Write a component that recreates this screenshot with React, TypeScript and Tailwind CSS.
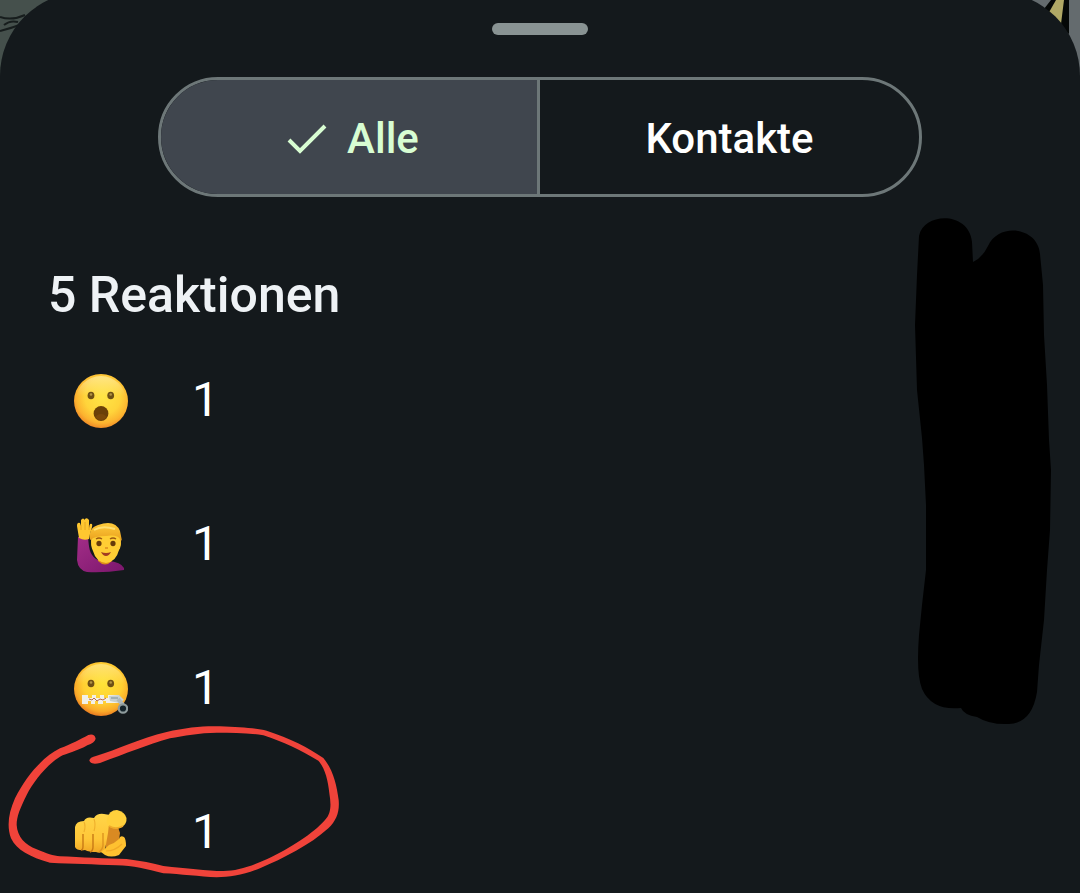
import { useState } from "react";

function SurprisedFace() {
  return (
    <svg viewBox="0 0 56 56" className="size-14 shrink-0" role="img" aria-label="Erstauntes Gesicht">
      <defs>
        <radialGradient id="surprised-skin" cx="0.53" cy="0.42" r="0.6">
          <stop offset="0" stopColor="#ffe546" />
          <stop offset="0.55" stopColor="#ffd43b" />
          <stop offset="0.82" stopColor="#fcb32f" />
          <stop offset="1" stopColor="#ef8526" />
        </radialGradient>
        <linearGradient id="surprised-shine" x1="0" y1="0" x2="0" y2="1">
          <stop offset="0" stopColor="#fff3b8" stopOpacity="0.6" />
          <stop offset="0.4" stopColor="#fff3b8" stopOpacity="0" />
        </linearGradient>
      </defs>
      <circle cx="29" cy="28" r="27" fill="url(#surprised-skin)" />
      <circle cx="29" cy="28" r="25" fill="url(#surprised-shine)" />
      <ellipse cx="19" cy="22.5" rx="3.4" ry="3.8" fill="#6e5016" />
      <ellipse cx="38.7" cy="22.5" rx="3.4" ry="3.8" fill="#6e5016" />
      <circle cx="19" cy="21.5" r="1.3" fill="#b29445" />
      <circle cx="38.7" cy="21.5" r="1.3" fill="#b29445" />
      <circle cx="29" cy="40.5" r="7.4" fill="#6b4008" />
      <ellipse cx="29" cy="44" rx="5" ry="3" fill="#7a480a" />
    </svg>
  );
}

function RaisedHandPerson() {
  return (
    <svg viewBox="0 0 56 56" className="size-14 shrink-0" role="img" aria-label="Person mit erhobener Hand">
      <defs>
        <linearGradient id="shirt" x1="0" y1="0" x2="1" y2="1">
          <stop offset="0" stopColor="#a22d87" />
          <stop offset="1" stopColor="#7c176d" />
        </linearGradient>
        <linearGradient id="hair" x1="0" y1="0" x2="0" y2="1">
          <stop offset="0" stopColor="#ffcb3a" />
          <stop offset="1" stopColor="#e9a01e" />
        </linearGradient>
      </defs>
      <path d="M6 20 H16 C17 30 17 37 24 42 Q29 45 36 44 Q49 45 52 51 L52 53 Q32 56 15 55 Q6 53 5 43Z" fill="url(#shirt)" />
      <path d="M26 39 H40 V44 Q33 51 26 44Z" fill="#dc8d17" />
      <path d="M7 21 L5 9 Q5 5 8 6 L9 9 L9 3 Q11 0 13 3 L13 2 Q15 0 17 3 L17 11 L18 7 Q21 6 20 10 L18 17 L17 22 Q12 24 7 21Z" fill="#ffc730" />
      <path d="M9 8 V13 M13 5 V13 M17 8 V13" stroke="#e0a022" strokeWidth="0.8" />
      <ellipse cx="34" cy="24" rx="15" ry="17" fill="url(#hair)" />
      <path d="M20 22 Q22 17 34 18 Q46 16 48 23 Q50 28 47 33 Q44 45 34 46 Q24 45 21 34 Q18 28 20 22Z" fill="#ffce34" />
      <path d="M18 23 Q16 11 26 8 Q43 2 48 14 L50 24 Q46 17 34 19 Q23 19 18 23Z" fill="url(#hair)" />
      <path d="M22 13 Q30 8 43 12" fill="none" stroke="#ffdf70" strokeWidth="2" />
      <path d="M24 22 Q27 20 30 22 M38 22 Q41 20 44 22" fill="none" stroke="#9c5812" strokeWidth="1.4" />
      <ellipse cx="27" cy="26.5" rx="2.6" ry="2.7" fill="#673b0a" />
      <ellipse cx="41" cy="26.5" rx="2.6" ry="2.7" fill="#673b0a" />
      <path d="M33 31 H36" stroke="#dd8e20" strokeWidth="1.5" />
      <path d="M29 35 Q34 37 39 35 Q37 39 34 39 Q31 39 29 35Z" fill="#a13d22" />
    </svg>
  );
}

function ZippedFace() {
  return (
    <svg viewBox="0 0 56 56" className="size-14 shrink-0" role="img" aria-label="Gesicht mit Reißverschlussmund">
      <defs>
        <radialGradient id="zipped-skin" cx="0.53" cy="0.4" r="0.6">
          <stop offset="0" stopColor="#ffe438" />
          <stop offset="0.6" stopColor="#ffcf32" />
          <stop offset="0.86" stopColor="#faaa29" />
          <stop offset="1" stopColor="#e97d21" />
        </radialGradient>
        <linearGradient id="zipped-shine" x1="0" y1="0" x2="0" y2="1">
          <stop offset="0" stopColor="#fff3b8" stopOpacity="0.5" />
          <stop offset="0.4" stopColor="#fff3b8" stopOpacity="0" />
        </linearGradient>
      </defs>
      <circle cx="29" cy="28" r="27" fill="url(#zipped-skin)" />
      <circle cx="29" cy="28" r="25" fill="url(#zipped-shine)" />
      <ellipse cx="19" cy="22.5" rx="3.4" ry="3.8" fill="#6e5016" />
      <ellipse cx="38.7" cy="22.5" rx="3.4" ry="3.8" fill="#6e5016" />
      <circle cx="19" cy="21.5" r="1.3" fill="#b29445" />
      <circle cx="38.7" cy="21.5" r="1.3" fill="#b29445" />
      <path d="M10 34 H16 V37 H20 V34 H24 V37 H28 V34 H32 V37 H36 V34 H47 V42 H34 V40 H31 V43 H26 V40 H23 V43 H19 V40 H16 V43 H10Z" fill="#f2f0e8" />
      <path d="M16 38.5 H37" stroke="#f2f0e8" strokeWidth="3" />
      <path d="M17 38 L20 39 L22 37 L25 40 L28 38 L31 39 L34 37" fill="none" stroke="#b7684a" strokeWidth="1" />
      <path d="M37 35 L47 34 L52 39 L47 42 L38 40Z" fill="#c6d0d1" />
      <path d="M39 37 H46" stroke="#8c9ea2" strokeWidth="1.3" />
      <path d="M46 38 L51 44" stroke="#afb9ba" strokeWidth="4" />
      <circle cx="51" cy="47.5" r="4.2" fill="#15242b" stroke="#8e9b9c" strokeWidth="2.2" />
    </svg>
  );
}

function PointingHand() {
  return (
    <svg viewBox="0 0 56 56" className="size-14 shrink-0" role="img" aria-label="Zeigefinger auf Betrachter">
      <defs>
        <linearGradient id="hand" x1="0" y1="0" x2="0" y2="1">
          <stop offset="0" stopColor="#ffd548" />
          <stop offset="0.65" stopColor="#ffc738" />
          <stop offset="1" stopColor="#f0a624" />
        </linearGradient>
      </defs>
      <path d="M33 12 H42 L46 22 L48 28 L47 35 L34 45Z" fill="#d98a22" />
      <path d="M3 22 Q4 16 12 16 Q14 11 22 13 Q25 8 32 9 L38 10 L36 28 L33 45 Q29 49 24 47 Q17 47 13 45 Q5 46 3 42Z" fill="url(#hand)" />
      <path d="M11 29 V41 Q11 45 9 45 M21 29 V42 Q21 46 18 47" fill="none" stroke="#c87916" strokeWidth="1.4" />
      <path d="M31 28 V40 Q31 44 27 47" fill="none" stroke="#dd9420" strokeWidth="1.4" />
      <path d="M12 17 Q14 21 12 27 M22 14 Q24 19 22 26" fill="none" stroke="#efb02c" strokeWidth="1.2" />
      <path d="M29 47 Q34 43 37 40 Q43 38 47 34 Q48 30 52 32 Q54 34 54 41 Q50 46 47 50 Q39 53 33 50Z" fill="#ffc130" />
      <path d="M34 46 Q43 46 50 39" fill="none" stroke="#f2aa26" strokeWidth="1.2" />
      <path d="M35 14 Q37 5 45 5 Q53 7 54.500 13 Q55 19 50 22 Q44 25 38 22 Q34 20 35 14Z" fill="#ffd03c" />
      <path d="M37 21 Q44 25 51 21" fill="none" stroke="#f0aa28" strokeWidth="1.6" />
    </svg>
  );
}

const reactions = [
  { id: "surprised", Icon: SurprisedFace, count: 1 },
  { id: "raised-hand", Icon: RaisedHandPerson, count: 1 },
  { id: "zipped", Icon: ZippedFace, count: 1 },
  { id: "pointing", Icon: PointingHand, count: 1 },
];

export default function App() {
  const [filter, setFilter] = useState("alle");
  const isAll = filter === "alle";

  return (
    <div className="relative h-screen overflow-hidden bg-[#48524f] font-[Roboto,sans-serif]">
      <svg className="absolute top-0 left-0 h-20 w-20" viewBox="0 0 80 80" aria-hidden="true">
        <rect width="80" height="80" fill="#45504c" />
        <path d="M0 17 Q12 21 25 15 M0 31 Q12 28 25 23 M4 25 Q10 20 18 22" fill="none" stroke="#171d1d" strokeWidth="2" />
      </svg>
      <svg className="absolute top-0 right-0 h-20 w-20" viewBox="0 0 80 80" aria-hidden="true">
        <rect width="80" height="80" fill="#646b6e" />
        <path d="M51 0 H69 V34 L40 14Z" fill="#050807" />
        <path d="M56 0 H64 L61 24 L48 14Z" fill="#b0a865" />
      </svg>

      <main className="relative -mt-2 flex min-h-full flex-col rounded-t-[84px] bg-[#14191c] pt-[31px] text-[#eef2f5]">
        <div className="mx-auto h-3 w-24 rounded-full bg-[#899393]" />

        <div className="mt-[42px] px-12">
          <div
            role="group"
            aria-label="Reaktionen filtern"
            className="mx-auto grid h-[120px] w-full max-w-[764px] grid-cols-2 overflow-hidden rounded-full border-[3px] border-[#6d7778] text-[42px] leading-[48px] font-medium"
          >
            <button
              type="button"
              aria-pressed={isAll}
              onClick={() => setFilter("alle")}
              className={`flex items-center justify-center gap-5 border-r-[3px] border-[#6d7778] pt-1 pl-2 ${isAll ? "bg-[#40464e] text-[#d8fdd2]" : "text-white"}`}
            >
              {isAll && (
                <svg viewBox="0 0 40 32" className="h-8 w-10" fill="none" stroke="currentColor" strokeWidth="4" aria-hidden="true">
                  <path d="M2 17 L13 28 L38 3" />
                </svg>
              )}
              Alle
            </button>
            <button
              type="button"
              aria-pressed={!isAll}
              onClick={() => setFilter("kontakte")}
              className={`flex items-center justify-center pt-1 ${isAll ? "text-white" : "bg-[#40464e] text-[#d8fdd2]"}`}
            >
              Kontakte
            </button>
          </div>
        </div>

        <h1 className="mt-16 px-12 text-[50px] leading-[68px] font-medium">5 Reaktionen</h1>

        <ul>
          {reactions.map(({ id, Icon, count }) => (
            <li key={id} className="flex h-36 items-center gap-16 px-[72px]">
              <Icon />
              <span className="pb-0.5 text-[48px] leading-[56px] text-white">{count}</span>
            </li>
          ))}
        </ul>
      </main>

      <svg className="pointer-events-none absolute top-[216px] right-7 h-[510px] w-[138px]" viewBox="914 216 138 510" aria-hidden="true">
        <path
          d="M919 236 C924 212 969 211 972 242 L973 262 Q982 258 988 246 C999 222 1038 227 1040 254 L1043 285 L1044 335 L1047 385 L1049 440 L1051 470 L1050 530 L1047 570 L1044 620 L1039 665 L1037 692 Q1032 723 1009 724 Q990 725 977 717 Q964 715 961 708 Q932 711 922 689 Q916 674 919 635 L922 605 L926 570 L926 505 L924 465 L922 438 L917 390 L915 325 L917 275Z"
          fill="#000"
        />
      </svg>
      <svg className="pointer-events-none absolute top-[720px] left-0 h-[173px] w-[350px]" viewBox="0 0 1050 519" aria-hidden="true">
        <path
          d="M268 122 Q268 112 290 107 C350 90 420 55 500 36 C560 21 620 17 660 19 C720 22 770 24 800 32 C870 55 925 82 970 114 C1000 150 1010 195 1016 240 C1019 275 1010 300 985 325 C930 375 850 415 780 445 C730 465 690 472 650 472 C600 470 540 462 490 460 C440 448 400 437 350 436 C280 432 220 432 150 428 C90 412 50 390 33 355 C20 320 25 280 45 235 C80 165 130 110 180 85 C215 72 240 58 265 45 Q284 40 287 56 Q284 68 262 76 C235 92 200 100 180 110 C140 135 100 185 80 225 C60 265 50 290 50 315 C52 350 75 375 110 388 C140 400 160 408 180 409 C240 411 320 417 380 417 C420 422 460 430 490 438 C560 445 620 453 670 453 C710 453 750 440 800 418 C870 385 940 340 975 300 C995 280 993 250 988 220 C984 180 975 145 955 122 C900 90 850 65 790 46 C740 38 700 38 650 38 C600 38 550 48 510 55 C440 75 380 100 300 129 Q274 136 268 122Z"
          fill="#f0433a"
        />
      </svg>
    </div>
  );
}
